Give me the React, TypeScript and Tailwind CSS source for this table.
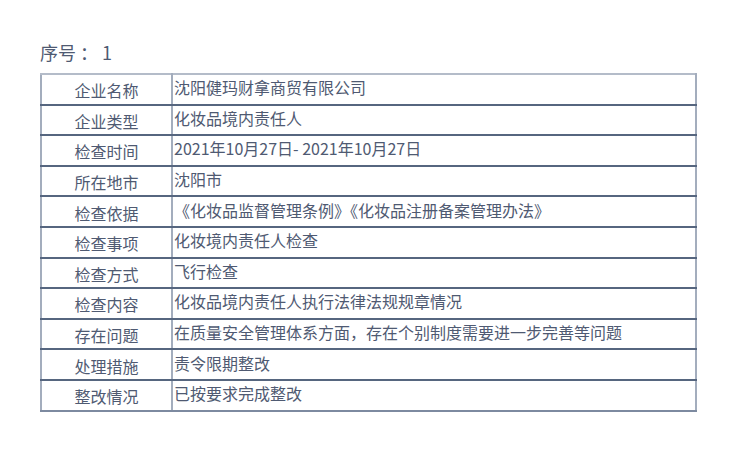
const rows: [string, string][] = [
  ["企业名称", "沈阳健玛财拿商贸有限公司"],
  ["企业类型", "化妆品境内责任人"],
  ["检查时间", "2021年10月27日- 2021年10月27日"],
  ["所在地市", "沈阳市"],
  ["检查依据", "《化妆品监督管理条例》《化妆品注册备案管理办法》"],
  ["检查事项", "化妆境内责任人检查"],
  ["检查方式", "飞行检查"],
  ["检查内容", "化妆品境内责任人执行法律法规规章情况"],
  ["存在问题", "在质量安全管理体系方面，存在个别制度需要进一步完善等问题"],
  ["处理措施", "责令限期整改"],
  ["整改情况", "已按要求完成整改"],
];

export default function App() {
  return (
    <div
      className="w-[734px] h-[468px] bg-white pl-[40px] pt-[39px] text-[#4f5a72]"
      style={{ fontFamily: '"Microsoft YaHei", "Noto Sans CJK SC", sans-serif' }}
    >
      <div className="text-[18px] leading-[26px] h-[34px] whitespace-pre">序号 ： 1</div>
      <table className="w-[657px] border-collapse text-[16px] leading-[20px]">
        <tbody>
          {rows.map(([label, value], i) => (
            <tr key={i} className="h-[30.6px]">
              <td
                className={`w-[131px] text-center border-l-2 border-r-2 border-l-[#a3adbd] border-r-[#a3adbd] border-t-2 border-b-2 ${
                  i === 0 ? "border-t-[#b4bcc9]" : "border-t-[#56667f]"
                } ${i === rows.length - 1 ? "border-b-[#7d8aa0]" : "border-b-[#56667f]"}`}
              >
                <span className="relative top-[1px]">{label}</span>
              </td>
              <td
                className={`pl-[1px] text-left whitespace-nowrap border-r-2 border-r-[#a3adbd] border-t-2 border-b-2 ${
                  i === 0 ? "border-t-[#b4bcc9]" : "border-t-[#56667f]"
                } ${i === rows.length - 1 ? "border-b-[#7d8aa0]" : "border-b-[#56667f]"}`}
              >
                <span className="relative top-[-2px]">{value}</span>
              </td>
            </tr>
          ))}
        </tbody>
      </table>
    </div>
  );
}
